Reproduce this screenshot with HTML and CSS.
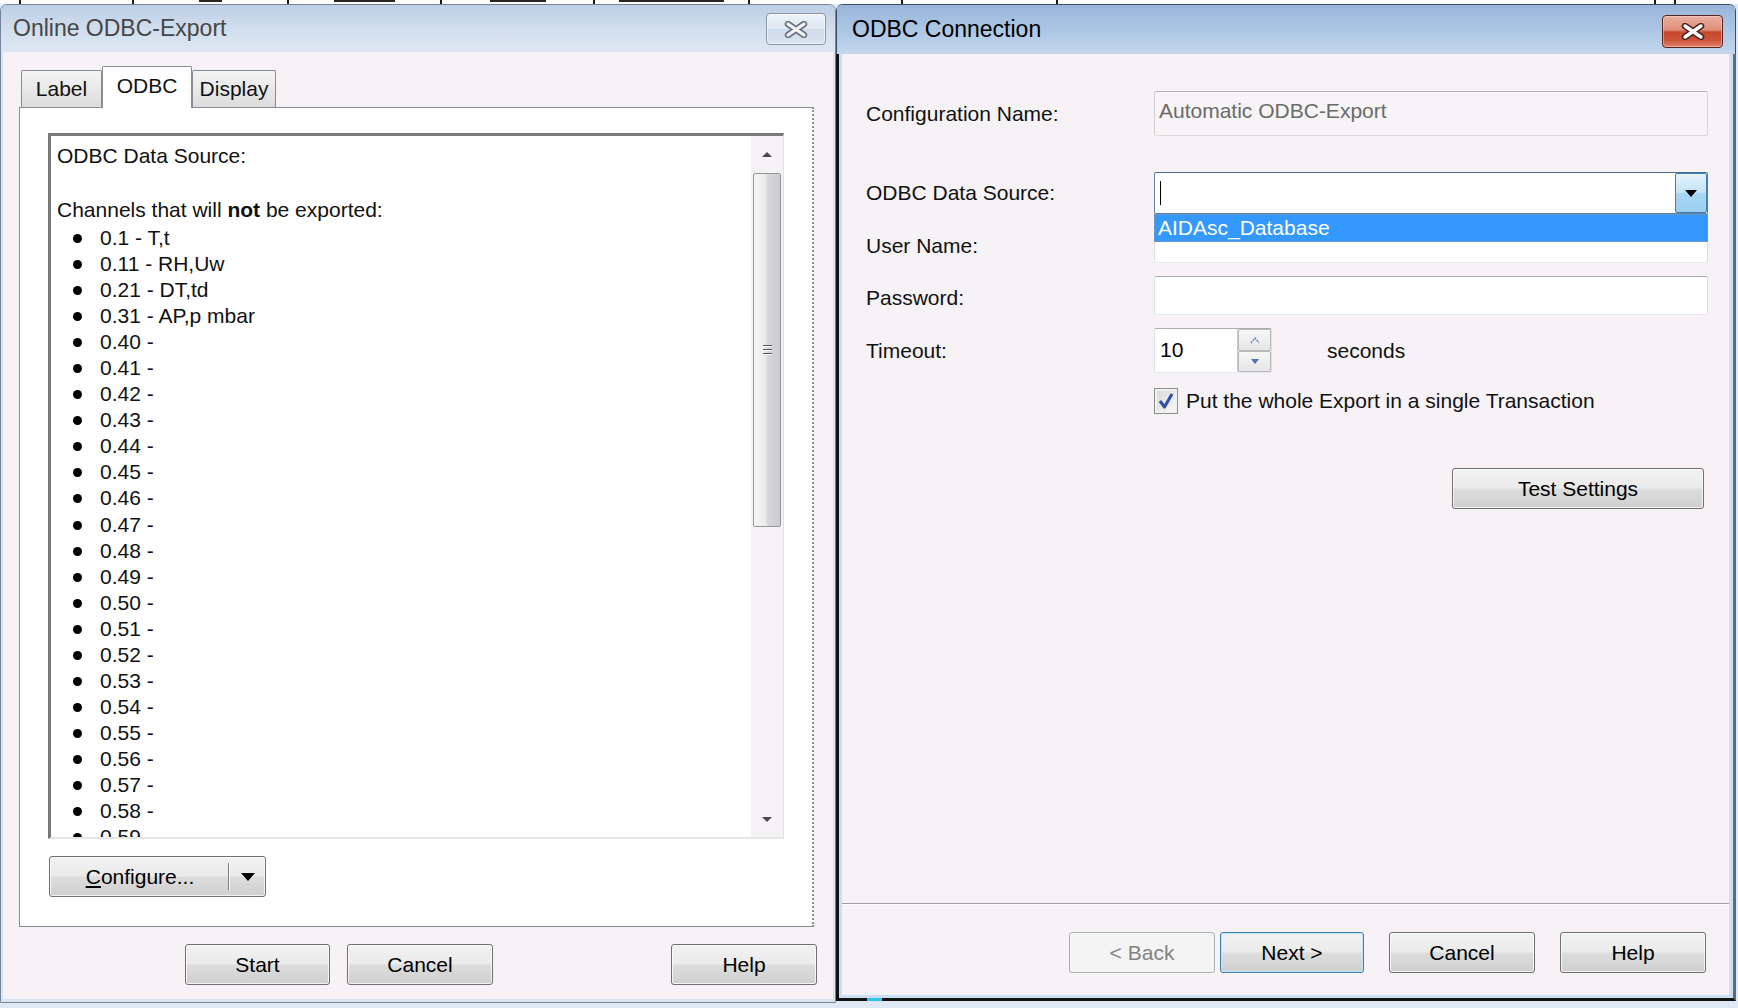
FILE: index.html
```html
<!DOCTYPE html>
<html lang="en">
<head>
<meta charset="utf-8">
<title>ODBC Export</title>
<link rel="stylesheet" href="styles.css">
</head>
<body>
<div class="screen">
  <div class="strip">
    <span class="cell c1"></span>
    <span class="cell c2"></span>
    <span class="cell c3"><span class="frag f1"></span></span>
    <span class="cell c4"><span class="frag f2"></span></span>
    <span class="cell c5"><span class="frag f3"></span></span>
    <span class="cell c6"><span class="frag f4"></span></span>
    <span class="cell c7"></span>
    <span class="cell c8"></span>
    <span class="cell c9"></span>
    <span class="cell c10"></span>
    <span class="cell c11"></span>
  </div>

  <div class="desktop">
    <!-- Left dialog -->
    <section class="win win-left">
      <header class="titlebar">
        <span class="title">Online ODBC-Export</span>
        <span class="close close-inactive">
          <svg width="24" height="17" viewBox="0 0 24 17">
            <path d="M4 3 L20 14 M20 3 L4 14" stroke="#6b7482" stroke-width="6.5" stroke-linecap="round" fill="none"/>
            <path d="M4 3 L20 14 M20 3 L4 14" stroke="#f1f3f6" stroke-width="3.2" stroke-linecap="round" fill="none"/>
          </svg>
        </span>
      </header>
      <div class="frame">
        <div class="client">
          <div class="tabs">
            <span class="tab tab-label">Label</span>
            <span class="tab tab-odbc active">ODBC</span>
            <span class="tab tab-display">Display</span>
          </div>
          <div class="page">
            <div class="listbox">
              <div class="listtext">
                <p class="line">ODBC Data Source:</p>
                <p class="line line-gap">Channels that will <b>not</b> be exported:</p>
                <ul class="channels">
                  <li><span class="dot"></span>0.1 - T,t</li>
                  <li><span class="dot"></span>0.11 - RH,Uw</li>
                  <li><span class="dot"></span>0.21 - DT,td</li>
                  <li><span class="dot"></span>0.31 - AP,p mbar</li>
                  <li><span class="dot"></span>0.40 -</li>
                  <li><span class="dot"></span>0.41 -</li>
                  <li><span class="dot"></span>0.42 -</li>
                  <li><span class="dot"></span>0.43 -</li>
                  <li><span class="dot"></span>0.44 -</li>
                  <li><span class="dot"></span>0.45 -</li>
                  <li><span class="dot"></span>0.46 -</li>
                  <li><span class="dot"></span>0.47 -</li>
                  <li><span class="dot"></span>0.48 -</li>
                  <li><span class="dot"></span>0.49 -</li>
                  <li><span class="dot"></span>0.50 -</li>
                  <li><span class="dot"></span>0.51 -</li>
                  <li><span class="dot"></span>0.52 -</li>
                  <li><span class="dot"></span>0.53 -</li>
                  <li><span class="dot"></span>0.54 -</li>
                  <li><span class="dot"></span>0.55 -</li>
                  <li><span class="dot"></span>0.56 -</li>
                  <li><span class="dot"></span>0.57 -</li>
                  <li><span class="dot"></span>0.58 -</li>
                  <li><span class="dot"></span>0.59 -</li>
                </ul>
              </div>
              <div class="vscroll">
                <div class="sarrow"><span class="tri-up"></span></div>
                <div class="thumb"><span class="grip"><i></i><i></i><i></i></span></div>
                <div class="strack"></div>
                <div class="sarrow"><span class="tri-down"></span></div>
              </div>
            </div>
            <div class="btn splitbtn">
              <span class="split-main"><u>C</u>onfigure...</span>
              <span class="split-sep"></span>
              <span class="split-arrow"><span class="tri-black"></span></span>
            </div>
          </div>
          <div class="btnrow-left">
            <span class="btn btn-start">Start</span>
            <span class="btn btn-cancel-l">Cancel</span>
            <span class="btn btn-help-l">Help</span>
          </div>
        </div>
      </div>
    </section>

    <!-- Right dialog -->
    <section class="win win-right">
      <header class="titlebar">
        <span class="title">ODBC Connection</span>
        <span class="close close-red">
          <svg width="26" height="17" viewBox="0 0 26 17">
            <path d="M5 3 L21 14 M21 3 L5 14" stroke="#4a2520" stroke-width="6.5" stroke-linecap="round" fill="none"/>
            <path d="M5 3 L21 14 M21 3 L5 14" stroke="#ffffff" stroke-width="3.4" stroke-linecap="round" fill="none"/>
          </svg>
        </span>
      </header>
      <div class="frame">
        <div class="client">
          <div class="row row-config">
            <span class="lbl">Configuration Name:</span>
            <span class="tb tb-disabled">Automatic ODBC-Export</span>
          </div>
          <div class="row row-odbc">
            <span class="lbl">ODBC Data Source:</span>
            <span class="combo">
              <span class="caret"></span>
              <span class="dropbtn"><span class="tri-black small"></span></span>
            </span>
            <div class="droplist">AIDAsc_Database</div>
          </div>
          <div class="row row-user">
            <span class="lbl">User Name:</span>
            <span class="tb"></span>
          </div>
          <div class="row row-pass">
            <span class="lbl">Password:</span>
            <span class="tb"></span>
          </div>
          <div class="row row-timeout">
            <span class="lbl">Timeout:</span>
            <span class="spin">
              <span class="spin-val">10</span>
              <span class="spin-btns">
                <span class="spin-b">
                  <svg width="12" height="8" viewBox="0 0 12 8"><path d="M2 7 L6 2 L10 7" stroke="#5a78b8" stroke-width="1.3" fill="none" stroke-dasharray="2 1"/></svg>
                </span>
                <span class="spin-b">
                  <svg width="12" height="8" viewBox="0 0 12 8"><path d="M2 2 L10 2 L6 7 Z" fill="#4f6fb5"/></svg>
                </span>
              </span>
            </span>
            <span class="seconds">seconds</span>
          </div>
          <div class="row row-check">
            <span class="chk">
              <svg width="18" height="20" viewBox="0 0 18 20"><path d="M3 10 L7.5 16 L15 3" stroke="#2f4fa6" stroke-width="3" fill="none" stroke-linejoin="round"/></svg>
            </span>
            <span class="chk-label">Put the whole Export in a single Transaction</span>
          </div>
          <div class="row row-test">
            <span class="btn btn-test">Test Settings</span>
          </div>
          <div class="spacer"></div>
          <div class="separator"></div>
          <div class="btnrow-right">
            <span class="btn btn-disabled btn-back">&lt; Back</span>
            <span class="btn btn-default btn-next">Next &gt;</span>
            <span class="btn btn-cancel-r">Cancel</span>
            <span class="btn btn-help-r">Help</span>
          </div>
        </div>
      </div>
    </section>
  </div>
</div>
</body>
</html>
```

FILE: styles.css
```css
* { box-sizing: border-box; }
html, body { margin: 0; padding: 0; }
body {
  width: 1738px;
  height: 1008px;
  overflow: hidden;
  background: #dfe9f5;
  font-family: "Liberation Sans", Arial, sans-serif;
  font-size: 21px;
  color: #000;
}
.screen { width: 1738px; height: 1008px; }

/* strip of the window behind */
.strip { display: flex; height: 4px; background: #ffffff; }
.cell { height: 4px; border-right: 2px solid #1a1a1a; display: flex; justify-content: center; }
.c1 { width: 21px; }
.c2 { width: 113px; }
.c3 { width: 155px; }
.c4 { width: 153px; }
.c5 { width: 153px; }
.c6 { width: 155px; }
.c7 { width: 153px; }
.c8 { width: 155px; }
.c9 { width: 598px; }
.c10 { width: 20px; }
.c11 { flex: 1; border-right: none; }
.frag { height: 2px; background: #262626; }
.f1 { width: 23px; }
.f2 { width: 61px; }
.f3 { width: 56px; }
.f4 { width: 105px; }

.desktop { display: flex; align-items: flex-start; }

/* windows */
.win {
  display: flex;
  flex-direction: column;
  border-radius: 7px 7px 0 0;
  overflow: hidden;
  flex: none;
}
.titlebar {
  display: flex;
  align-items: center;
  justify-content: space-between;
  flex: none;
}
.title { font-size: 23px; white-space: nowrap; }
.close {
  display: flex;
  align-items: center;
  justify-content: center;
  align-self: flex-start;
  border-radius: 4px;
}

.win-left {
  width: 836px;
  height: 999px;
  border: 1px solid #74849a;
  background: #dae5f2;
}
.win-left .titlebar {
  height: 47px;
  padding: 0 9px 0 12px;
  background: linear-gradient(#bdcfe5, #d2dfee 55%, #dde8f4);
}
.win-left .title { color: #464646; }
.close-inactive {
  width: 60px;
  height: 32px;
  margin-top: 8px;
  border: 1px solid #8796ab;
  background: linear-gradient(#eef3f9, #dfe8f3 48%, #d1dcea 52%, #dae4f0);
  box-shadow: inset 0 0 0 1px rgba(255,255,255,0.6);
}

.win-left .frame {
  flex: 1;
  display: flex;
  padding: 0 2px 3px 2px;
}
.win-left .client {
  flex: 1;
  background: #f6f2f6;
  display: flex;
  flex-direction: column;
  padding: 14px 19px 0 16px;
}

/* tabs */
.tabs {
  display: flex;
  align-items: flex-end;
  height: 41px;
  margin-left: 2px;
  position: relative;
  z-index: 1;
}
.tab {
  height: 37px;
  display: flex;
  align-items: center;
  justify-content: center;
  border: 1px solid #898c95;
  border-bottom: none;
  border-radius: 2px 2px 0 0;
  background: linear-gradient(#f4f4f4, #e9e9e9 50%, #dcdcdc);
  color: #111;
}
.tab-label { width: 81px; }
.tab-odbc { width: 90px; }
.tab-display { width: 84px; }
.tab.active {
  height: 42px;
  margin-bottom: -1px;
  background: #ffffff;
  padding-bottom: 4px;
}

.page {
  height: 820px;
  background: #ffffff;
  border: 1px solid #898c95;
  border-right: 2px dotted #8f8f8f;
  padding: 25px 0 0 28px;
}

.listbox {
  width: 736px;
  height: 706px;
  display: flex;
  border-left: 3px solid #7a7a7a;
  border-top: 3px solid #7a7a7a;
  border-right: 1px solid #e2e2e2;
  border-bottom: 2px solid #e6e6e6;
  background: #fff;
}
.listtext {
  flex: 1;
  overflow: hidden;
  padding: 7px 0 0 6px;
  color: #111;
}
.line { margin: 0; line-height: 26px; white-space: nowrap; }
.line-gap { margin-top: 28px; }
.channels {
  list-style: none;
  margin: 2px 0 0 0;
  padding: 0;
}
.channels li {
  display: flex;
  align-items: center;
  height: 26.05px;
  line-height: 26px;
  white-space: nowrap;
}
.dot {
  width: 9px;
  height: 9px;
  border-radius: 50%;
  background: #000;
  margin: 1px 18px 0 16px;
  flex: none;
}

.vscroll {
  width: 32px;
  flex: none;
  display: flex;
  flex-direction: column;
  background: #f4f2f5;
}
.sarrow {
  height: 36px;
  flex: none;
  display: flex;
  align-items: center;
  justify-content: center;
}
.tri-up {
  width: 0; height: 0;
  border-left: 5px solid transparent;
  border-right: 5px solid transparent;
  border-bottom: 5px solid #4a4a4a;
}
.tri-down {
  width: 0; height: 0;
  border-left: 5px solid transparent;
  border-right: 5px solid transparent;
  border-top: 5px solid #4a4a4a;
}
.thumb {
  height: 354px;
  margin: 1px 2px 0 2px;
  border: 1px solid #979797;
  border-radius: 2px;
  background: linear-gradient(to right, #f6f6f6 0%, #ececec 40%, #d6d6da 55%, #cbcbd0 100%);
  display: flex;
  align-items: center;
  justify-content: center;
  flex: none;
}
.grip { display: flex; flex-direction: column; gap: 2px; }
.grip i { display: block; width: 9px; height: 2px; background: #555; border-bottom: 1px solid #fafafa; }
.strack { flex: 1; }

/* buttons */
.btn {
  display: flex;
  align-items: center;
  justify-content: center;
  height: 41px;
  border: 1px solid #707070;
  border-radius: 3px;
  background: linear-gradient(#f2f2f2 0%, #ebebeb 48%, #dddddd 52%, #cfcfcf 100%);
  box-shadow: inset 0 0 0 1px rgba(255,255,255,0.75);
  color: #000;
  white-space: nowrap;
  flex: none;
}

.splitbtn {
  width: 217px;
  margin: 17px 0 0 1px;
  justify-content: flex-start;
  align-items: stretch;
}
.split-main {
  width: 178px;
  display: flex;
  align-items: center;
  justify-content: center;
  padding-left: 2px;
}
.split-main u { text-decoration: underline; text-underline-offset: 2px; }
.split-sep {
  width: 2px;
  margin: 6px 0 6px 0;
  border-left: 1px solid #7d7d7d;
  border-right: 1px solid #fbfbfb;
}
.split-arrow {
  flex: 1;
  display: flex;
  align-items: center;
  justify-content: center;
}
.tri-black {
  width: 0; height: 0;
  border-left: 7px solid transparent;
  border-right: 7px solid transparent;
  border-top: 8px solid #000;
}
.tri-black.small {
  border-left-width: 6px;
  border-right-width: 6px;
  border-top-width: 7px;
}

.btnrow-left {
  display: flex;
  margin: 17px -3px 0 0;
  padding-left: 166px;
}
.btn-start { width: 145px; }
.btn-cancel-l { width: 146px; margin-left: 17px; }
.btn-help-l { width: 146px; margin-left: auto; }

/* right dialog */
.win-right {
  width: 900px;
  height: 997px;
  border-top: 1px solid #3d4d62;
  background: #cddff2;
}
.win-right .titlebar {
  height: 49px;
  padding: 0 12px 0 15px;
  background: linear-gradient(#99b5d8, #acc6e5 50%, #c3d7ee);
  border-left: 1px solid #3d4d62;
  border-right: 1px solid #3d4d62;
}
.win-right .title { color: #000; }
.close-red {
  width: 61px;
  height: 33px;
  margin-top: 10px;
  border: 1px solid #5a2520;
  background: linear-gradient(#eab0a0 0%, #de8d78 45%, #c8462b 52%, #cc553a 78%, #e0866b 100%);
  box-shadow: inset 0 0 0 1px rgba(255,220,210,0.45);
}

.win-right .frame {
  flex: 1;
  display: flex;
  position: relative;
  border-left: 3px solid #121212;
  border-right: 3px solid #5d6b7b;
  border-bottom: 3px solid #121212;
  padding: 0 4px 3px 3px;
}
.win-right .frame::after {
  content: "";
  position: absolute;
  left: 28px;
  bottom: -3px;
  width: 15px;
  height: 3px;
  background: #2cc4ef;
}
.win-right .client {
  flex: 1;
  background: #f6f2f6;
  display: flex;
  flex-direction: column;
  padding: 37px 21px 22px 24px;
}

.row { display: flex; align-items: center; flex: none; }
.lbl { width: 288px; flex: none; white-space: nowrap; color: #111; }
.row-config { height: 45px; }
.row-odbc { height: 42px; margin-top: 36px; position: relative; }
.row-user { height: 40px; margin-top: 9px; }
.row-user .lbl { padding-top: 6px; }
.row-pass { height: 39px; margin-top: 13px; }
.row-pass .lbl { padding-top: 4px; }
.row-timeout { height: 45px; margin-top: 13px; }
.row-check { height: 26px; margin-top: 15px; padding-left: 288px; }
.row-test { height: 41px; margin-top: 54px; justify-content: flex-end; padding-right: 4px; }

.tb {
  flex: 1;
  height: 100%;
  background: #ffffff;
  border: 1px solid;
  border-color: #abadb3 #dbdfe6 #e3e9ef #e2e3ea;
  border-radius: 2px;
}
.tb-disabled {
  background: #f7f4f7;
  border-color: #b5b5b5 #d6d6d6 #dcdcdc #cfcfcf;
  color: #6a6a6a;
  display: flex;
  align-items: center;
  padding: 0 0 5px 4px;
  white-space: nowrap;
}

.combo {
  flex: 1;
  height: 100%;
  display: flex;
  align-items: center;
  background: #ffffff;
  border: 1px solid #5d7ea3;
  border-top-color: #4d6e94;
  border-radius: 2px;
}
.caret { width: 1px; height: 24px; background: #000; margin-left: 5px; }
.dropbtn {
  width: 32px;
  height: 100%;
  margin-left: auto;
  display: flex;
  align-items: center;
  justify-content: center;
  border: 1px solid #3c7fb1;
  border-radius: 2px;
  background: linear-gradient(#e5f3fc 0%, #c4e4f8 48%, #a9d6f5 52%, #9ccfef 100%);
}
.droplist {
  position: absolute;
  left: 288px;
  right: 0;
  top: 42px;
  height: 28px;
  background: #3399ff;
  border: 1px solid #6b95c4;
  color: #ffffff;
  padding-left: 3px;
  line-height: 25px;
  z-index: 2;
  white-space: nowrap;
}

.spin {
  width: 118px;
  height: 100%;
  display: flex;
  background: #ffffff;
  border: 1px solid;
  border-color: #abadb3 #dbdfe6 #e3e9ef #e2e3ea;
  border-radius: 2px;
}
.spin-val { flex: 1; display: flex; align-items: center; padding: 0 0 2px 5px; }
.spin-btns {
  width: 34px;
  display: flex;
  flex-direction: column;
  background: #e8e8e8;
  border-left: 1px solid #c9c9c9;
}
.spin-b {
  flex: 1;
  display: flex;
  align-items: center;
  justify-content: center;
  border: 1px solid #b9b9b9;
  border-radius: 2px;
  background: linear-gradient(#f7f7f7, #e6e6e6);
}
.seconds { margin-left: 55px; color: #111; }

.chk {
  width: 24px;
  height: 26px;
  display: flex;
  align-items: center;
  justify-content: center;
  border: 1px solid #8e8f8f;
  background: linear-gradient(135deg, #d8d8d8, #f7f7f7);
  box-shadow: inset 0 0 0 2px #f2f2f2;
}
.chk-label { margin-left: 8px; white-space: nowrap; color: #111; }

.btn-test { width: 252px; }

.spacer { flex: 1; }
.separator {
  height: 2px;
  margin: 0 -21px 0 -24px;
  border-top: 1px solid #a0a0a0;
  background: #ffffff;
  flex: none;
}
.btnrow-right {
  display: flex;
  justify-content: flex-end;
  margin-top: 27px;
  padding-right: 2px;
  flex: none;
}
.btn-back { width: 146px; }
.btn-next { width: 144px; margin-left: 5px; }
.btn-cancel-r { width: 146px; margin-left: 25px; }
.btn-help-r { width: 146px; margin-left: 25px; }
.btn-disabled {
  border-color: #adb2b5;
  background: #f4f4f4;
  color: #838383;
  box-shadow: none;
}
.btn-default {
  border-color: #3c7fb1;
  box-shadow: inset 0 0 0 1px #bfe4f9;
}
```
